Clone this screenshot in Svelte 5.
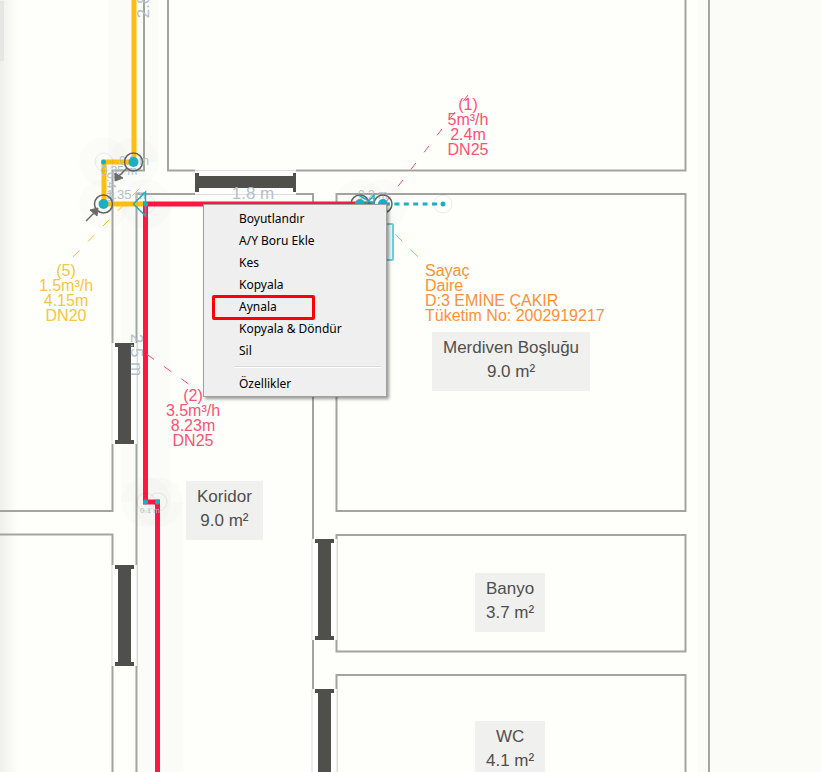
<script>
  const rooms = [
    { name: 'Merdiven Boşluğu', area: '9.0 m²', x: 432, y: 332 },
    { name: 'Koridor', area: '9.0 m²', x: 186, y: 481 },
    { name: 'Banyo', area: '3.7 m²', x: 475, y: 573 },
    { name: 'WC', area: '4.1 m²', x: 475, y: 721 }
  ];

  const pipes = [
    { lines: ['(1)', '5m³/h', '2.4m', 'DN25'], tone: 'red', x: 468, y: 97 },
    { lines: ['(2)', '3.5m³/h', '8.23m', 'DN25'], tone: 'red', x: 193, y: 388 },
    { lines: ['(5)', '1.5m³/h', '4.15m', 'DN20'], tone: 'yellow', x: 66, y: 263 }
  ];

  const meter = ['Sayaç', 'Daire', 'D:3 EMİNE ÇAKIR', 'Tüketim No: 2002919217'];

  const doors = [
    { x: 112, y: 343 },
    { x: 112, y: 565 },
    { x: 312, y: 539 },
    { x: 312, y: 689 }
  ];

  const items = ['Boyutlandır', 'A/Y Boru Ekle', 'Kes', 'Kopyala', 'Aynala', 'Kopyala & Döndür', 'Sil'];
  const marked = 'Aynala';
</script>

<main class="plan">
  <svg class="drawing" aria-hidden="true">
    <defs>
      <linearGradient id="edge">
        <stop offset="0" stop-color="#000" stop-opacity="0.06" />
        <stop offset="1" stop-color="#000" stop-opacity="0" />
      </linearGradient>
    </defs>

    <g class="tint">
      <rect x="698" y="0" width="2000" height="2000" />
      <rect x="108" y="0" width="50" height="162" />
      <rect x="121" y="204" width="50" height="298" />
      <rect x="133" y="502" width="50" height="1500" />
    </g>

    <rect x="0" y="0" width="18" height="2000" fill="url(#edge)" />
    <rect x="-4" y="1" width="8" height="60" rx="1" fill="#e6e6e5" />

    <g class="tint">
      <circle cx="134" cy="162" r="25" />
      <circle cx="104" cy="162" r="25" />
      <circle cx="104" cy="204" r="25" />
      <circle cx="146" cy="204" r="25" />
      <circle cx="146" cy="502" r="25" />
      <circle cx="158" cy="502" r="25" />
      <circle cx="360" cy="204" r="25" />
      <circle cx="383" cy="204" r="25" />
    </g>

    <g class="wall">
      <path d="M144 0V170.500H112.500V511H0M0 534.500H112.500V2000" />
      <path d="M168 0V170.500H685.500V0" />
      <path d="M136.500 2000V194H313V2000" />
      <path d="M336.500 194H685.500V511H336.500Z" />
      <path d="M336.500 535H685.500V651.500H336.500Z" />
      <path d="M336.500 2000V675H685.500V2000" />
      <path d="M709 0V2000" />
    </g>

    {#each doors as door}
      <g transform="translate({door.x} {door.y})">
        <rect x="-1" width="26" height="101" fill="#fff" />
        <path d="M0 0V101M25 0V101" stroke="#dededc" />
        <path d="M3 0H22V4H19V97H22V101H3V97H6V4H3Z" fill="#4f4f4c" />
      </g>
    {/each}
    <rect x="195" y="169" width="101" height="26" fill="#fff" />
    <path d="M195 170.500H296M195 194.500H296" stroke="#dededc" />
    <path d="M195 173H199V176H293V173H296V192H293V188H199V192H195Z" fill="#4f4f4c" />

    <g class="pipe yellow-line">
      <path d="M134 0V162H104V204H146" />
    </g>
    <g class="pipe red-line">
      <path d="M375 204H145.500V502H157.500V2000" />
    </g>

    <path d="M384 204H443" stroke="#1fb0c8" stroke-width="3" stroke-dasharray="5 4.400" stroke-dashoffset="-1" />
    <rect x="378" y="224" width="15" height="36" rx="1" fill="#e9f5f6" stroke="#6ccddb" stroke-width="2" />

    <g class="leader">
      <path d="M468 95L386 202" stroke="#fb4d73" stroke-dasharray="8 13.400" />
      <path d="M145 353L190 385" stroke="#fb4d73" stroke-dasharray="9 12.200" stroke-dashoffset="-2" />
      <path d="M139 189L72 258" stroke="#fbb82a" stroke-dasharray="9 12.400" />
      <path d="M380 219L419 258" stroke="#fda050" stroke-dasharray="10 11.600" />
    </g>

    <g class="dim">
      <text x="253" y="199" font-size="17">1.8 m</text>
      <text transform="translate(131 355) rotate(90)" font-size="17">2.5 m</text>
      <text transform="translate(149 -3) rotate(-90)" font-size="17">2.8 m</text>
      <text x="126" y="199" font-size="13">1.35 m</text>
      <text x="119" y="175" font-size="12">0.35 m</text>
      <text x="134" y="165" font-size="12">0.3 m</text>
      <text transform="translate(107 187) rotate(90)" font-size="12">0.4 m</text>
      <text x="150" y="513" font-size="8">0.1 m</text>
      <text x="373" y="199" font-size="12">0.2 m</text>
    </g>

    <g class="ring">
      <circle cx="104" cy="162" r="9" />
      <circle cx="146" cy="204" r="9" />
      <circle cx="146" cy="502" r="9" />
      <circle cx="158" cy="502" r="9" />
      <circle cx="443" cy="204" r="9" />
    </g>
    <g class="joint">
      <circle cx="133.500" cy="162" r="9" />
      <circle cx="103.500" cy="204" r="9" />
      <circle cx="360" cy="204" r="9" />
      <circle cx="383" cy="204" r="9" />
    </g>
    <g fill="#1eaec4">
      <circle cx="133.500" cy="162" r="5" />
      <circle cx="103.500" cy="204" r="5" />
      <circle cx="360" cy="204" r="5" />
      <circle cx="383" cy="204" r="5" />
      <circle cx="103.500" cy="162" r="2.500" />
      <circle cx="145.500" cy="204" r="2.500" />
      <circle cx="145.500" cy="502" r="2.500" />
      <circle cx="157.500" cy="502" r="2.500" />
      <circle cx="443" cy="204" r="2.500" />
    </g>
    <path d="M145.500 192V216L133.500 204ZM360 196L374 204V195L366 204" fill="none" stroke="#1eaec4" stroke-width="1.500" />

    <g fill="#6b6b69" stroke="#6b6b69">
      <path d="M127 168L118 177" stroke-width="1.500" />
      <path d="M115 173L123 178L115 181Z" />
      <path d="M86 221L95 212" stroke-width="1.500" />
      <path d="M98 208L97 216L90 210Z" />
    </g>
  </svg>

  {#each rooms as room}
    <p class="room" style:left="{room.x}px" style:top="{room.y}px">
      <span>{room.name}</span>
      <span>{room.area}</span>
    </p>
  {/each}

  {#each pipes as pipe}
    <p class="tag {pipe.tone}" style:left="{pipe.x}px" style:top="{pipe.y}px">
      {#each pipe.lines as line}<span>{line}</span>{/each}
    </p>
  {/each}

  <p class="tag meter">
    {#each meter as line}<span>{line}</span>{/each}
  </p>

  <div class="menu" role="menu">
    {#each items as item}
      <button type="button" role="menuitem" class:marked={item === marked}>{item}</button>
    {/each}
    <hr />
    <button type="button" role="menuitem">Özellikler</button>
  </div>
</main>

<style>
  :global(body) {
    margin: 0;
    background: #fefffa;
  }

  .plan {
    position: relative;
    height: 100vh;
    overflow: hidden;
    background: #fefffa;
    font-family: 'Liberation Sans', Arial, sans-serif;
  }

  .drawing {
    display: block;
    width: 100%;
    height: 100%;
  }

  .tint {
    fill: #000;
    fill-opacity: 0.013;
  }

  .wall {
    fill: none;
    stroke: #a3a3a0;
    stroke-width: 2;
  }

  .pipe {
    fill: none;
    stroke-width: 5;
  }

  .yellow-line {
    stroke: #ffbe0d;
  }

  .red-line {
    stroke: #ff1744;
  }

  .leader {
    fill: none;
    stroke-width: 1;
  }

  .dim {
    fill: #b4c0c8;
    text-anchor: middle;
  }

  .ring {
    fill: none;
    stroke: #000;
    stroke-opacity: 0.08;
  }

  .joint {
    fill: none;
    stroke: #626260;
    stroke-width: 1.5;
  }

  .room,
  .tag {
    position: absolute;
    display: flex;
    flex-direction: column;
    margin: 0;
    white-space: nowrap;
  }

  .room {
    align-items: center;
    padding: 4px 11px 7px;
    background: #f0f0ef;
    color: #4f4f4d;
    font-size: 17px;
    line-height: 24px;
  }

  .tag {
    align-items: center;
    transform: translateX(-50%);
    font-size: 16px;
    line-height: 15px;
  }

  .red {
    color: #fc5076;
  }

  .yellow {
    color: #f9c440;
  }

  .meter {
    left: 425px;
    top: 263px;
    align-items: flex-start;
    transform: none;
    color: #fd9038;
  }

  .menu {
    position: absolute;
    left: 203px;
    top: 204px;
    box-sizing: border-box;
    width: 184px;
    padding: 2px;
    border: 1px solid #a0a0a0;
    background: #efefef;
    box-shadow: 2px 2px 3px rgba(0, 0, 0, 0.4);
  }

  .menu button {
    position: relative;
    display: block;
    width: 100%;
    height: 22px;
    margin: 0;
    padding: 2px 0 0 33px;
    border: 0;
    background: none;
    color: #000;
    font: 12px/20px 'Noto Sans', 'Open Sans', sans-serif;
    text-align: left;
  }

  .menu button:hover {
    background: #e2e2e2;
  }

  .marked::after {
    content: '';
    position: absolute;
    inset: 0 69px -3px 6px;
    border: 3px solid #fd0000;
    border-radius: 2px;
  }

  .menu hr {
    margin: 5px 3px 5px 28px;
    height: 0;
    border: 0;
    border-top: 1px solid #dadada;
    box-shadow: 0 1px #fff;
  }
</style>
